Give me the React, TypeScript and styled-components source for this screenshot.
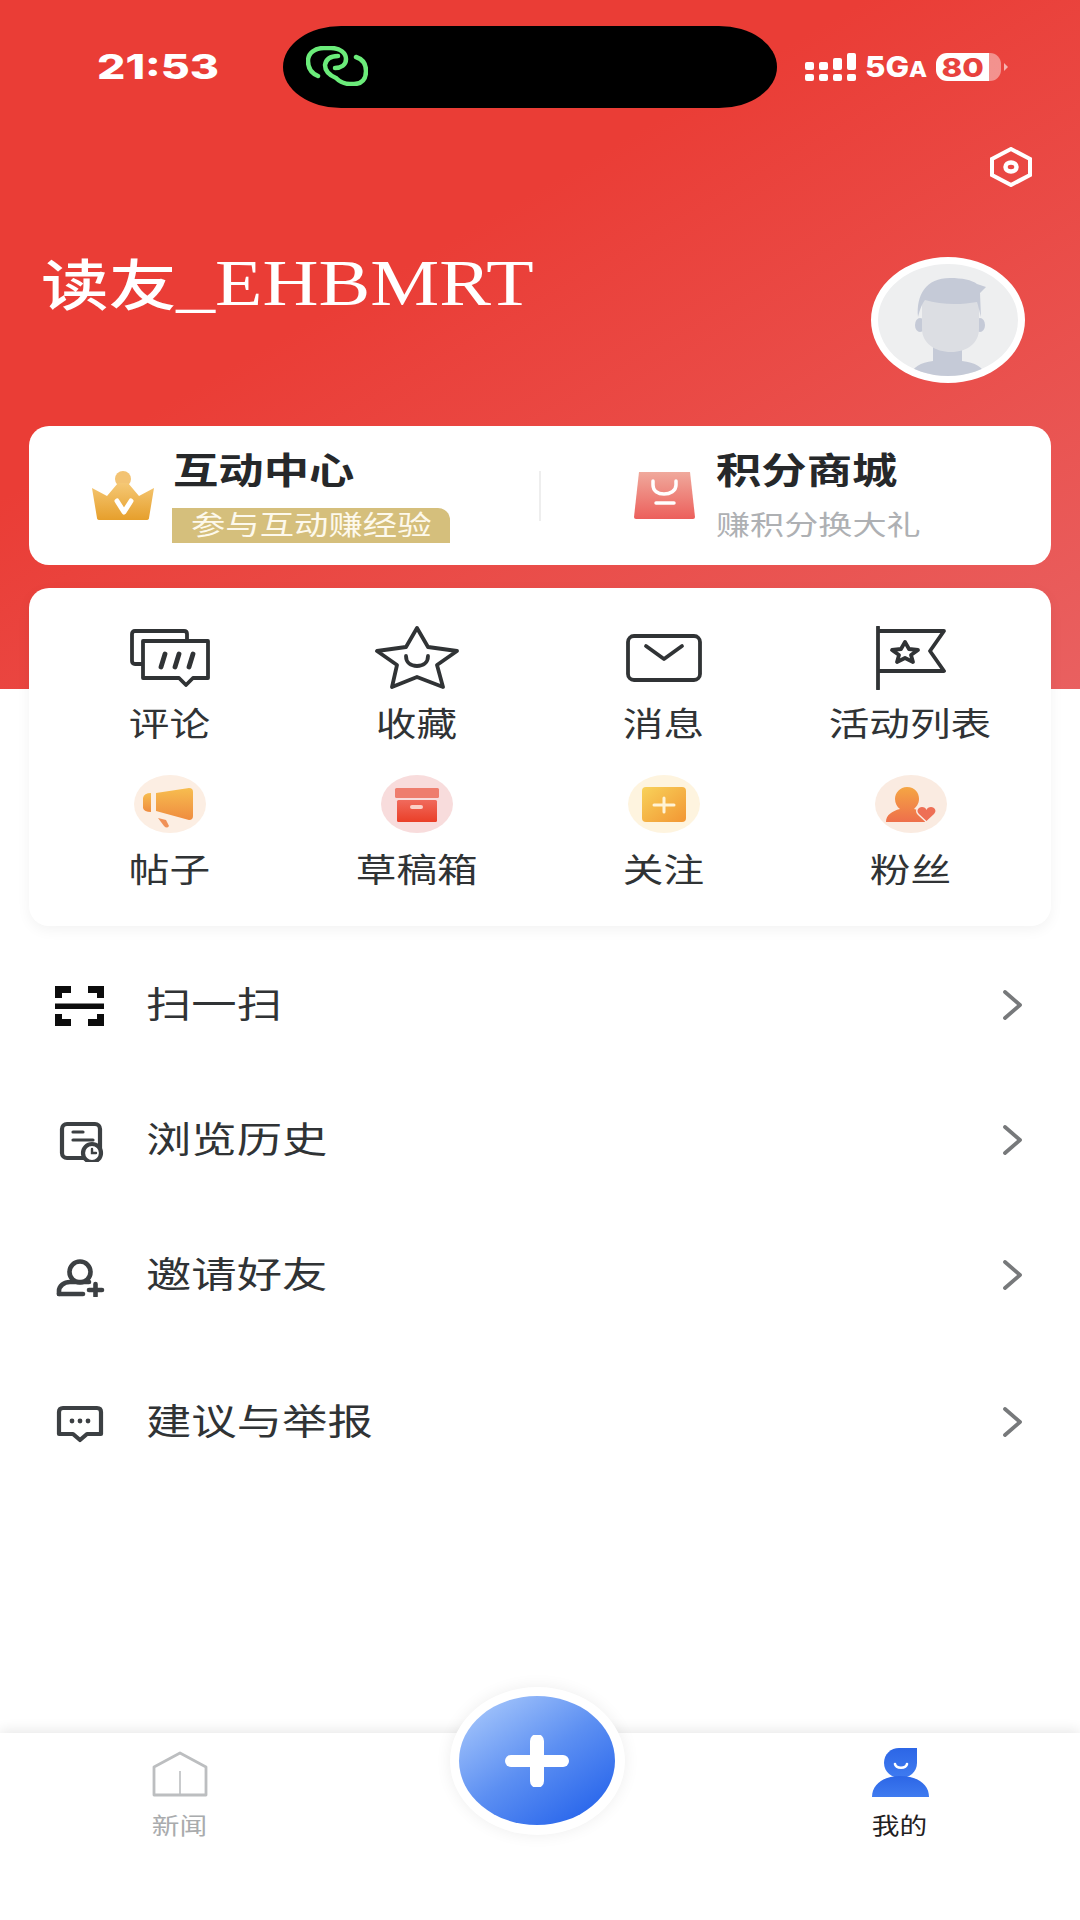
import React from 'react';
import styled, { createGlobalStyle, css } from 'styled-components';

const INK = '#303335';

const GlobalStyle = createGlobalStyle`
  html, body {
    margin: 0;
    padding: 0;
    background: #fff;
  }
  * {
    box-sizing: border-box;
  }
`;

// the reference is stretched sideways, text follows that with a scale
const wide = (origin: string, factor = 1.23) => css`
  display: inline-block;
  white-space: nowrap;
  transform: scaleX(${factor});
  transform-origin: ${origin} center;
`;

const bodyFont = `"Liberation Serif", "Noto Sans CJK SC", serif`;

export default function App() {
  const gridItems = [
    { label: '评论', icon: <CommentIcon /> },
    { label: '收藏', icon: <StarIcon /> },
    { label: '消息', icon: <MailIcon /> },
    { label: '活动列表', icon: <FlagIcon /> },
    { label: '帖子', icon: <Oval $bg='#fceee3'><HornIcon /></Oval> },
    { label: '草稿箱', icon: <Oval $bg='#f8dcdc'><BoxIcon /></Oval> },
    { label: '关注', icon: <Oval $bg='#fef4df'><PlusCardIcon /></Oval> },
    { label: '粉丝', icon: <Oval $bg='#faebe1'><FanIcon /></Oval> },
  ];

  const menuItems = [
    { label: '扫一扫', icon: <ScanIcon />, offset: 0 },
    { label: '浏览历史', icon: <HistoryIcon />, offset: 0 },
    { label: '邀请好友', icon: <InviteIcon />, offset: 0 },
    { label: '建议与举报', icon: <FeedbackIcon />, offset: 12 },
  ];

  return (
    <Page>
      <GlobalStyle />
      <Hero>
        <StatusBar>
          <Time><span>21:53</span></Time>
          <Island><LinkIcon /></Island>
          <StatusRight>
            <SignalIcon />
            <Network>5G<small>A</small></Network>
            <Battery><span>80</span></Battery>
          </StatusRight>
        </StatusBar>
        <SettingsRow><SettingsIcon /></SettingsRow>
        <Profile>
          <UserName>读友<span>_EHBMRT</span></UserName>
          <Avatar><AvatarFigure /></Avatar>
        </Profile>
      </Hero>

      <Cards>
        <PromoCard>
          <Promo $inset={63} $gap={19} $grow={false}>
            <CrownIcon />
            <PromoText>
              <PromoTitle>互动中心</PromoTitle>
              <PromoBadge><span>参与互动赚经验</span></PromoBadge>
            </PromoText>
          </Promo>
          <Divider />
          <Promo $inset={93} $gap={21} $grow={true}>
            <BagIcon />
            <PromoText>
              <PromoTitle>积分商城</PromoTitle>
              <PromoHint><span>赚积分换大礼</span></PromoHint>
            </PromoText>
          </Promo>
        </PromoCard>

        <GridCard>
          {gridItems.map((item) => (
            <GridCell key={item.label}>
              <GridIcon>{item.icon}</GridIcon>
              <GridLabel>{item.label}</GridLabel>
            </GridCell>
          ))}
        </GridCard>
      </Cards>

      <Menu>
        {menuItems.map((item) => (
          <MenuRow key={item.label} $offset={item.offset}>
            <MenuIcon>{item.icon}</MenuIcon>
            <MenuLabel>{item.label}</MenuLabel>
            <Chevron />
          </MenuRow>
        ))}
      </Menu>

      <TabBar>
        <Tab>
          <TabIcon><HomeIcon /></TabIcon>
          <TabLabel $active={false}>新闻</TabLabel>
        </Tab>
        <div />
        <Tab>
          <TabIcon><MeIcon /></TabIcon>
          <TabLabel $active={true}>我的</TabLabel>
        </Tab>
        <Fab><FabInner><FabPlus /></FabInner></Fab>
      </TabBar>
    </Page>
  );
}

function LinkIcon() {
  return (
    <svg width='62' height='40' viewBox='0 0 62 40' fill='none' stroke='#6bec7a' strokeWidth='4.5' strokeLinecap='round'>
      <path d='M12 30C5 27 2 22 2 15 2 7 9 2 18 2h7c9 0 15 5 15 11 0 6-5 9-11 9' />
      <path d='M32 10c-7 0-12 3-13 9 0 6 4 10 11 13 4 4 8 6 14 6h4c8 0 12-5 12-13 0-7-4-12-10-14' />
    </svg>
  );
}

function SignalIcon() {
  const bars = [
    { x: 0, y: 9, h: 8 },
    { x: 14, y: 9, h: 8 },
    { x: 28, y: 5, h: 12 },
    { x: 42, y: 0, h: 17 },
  ];
  return (
    <svg width='51' height='28' viewBox='0 0 51 28' fill='#fff'>
      {bars.map((bar) => (
        <g key={bar.x}>
          <rect x={bar.x} y={bar.y} width='9' height={bar.h} rx='2' />
          <rect x={bar.x} y='21' width='9' height='7' rx='2' />
        </g>
      ))}
    </svg>
  );
}

function SettingsIcon() {
  return (
    <svg width='44' height='40' viewBox='0 0 44 40' fill='none' stroke='#fff' strokeWidth='4'>
      <path d='M22 2 41 12v16L22 38 3 28V12Z' strokeLinejoin='miter' />
      <ellipse cx='22' cy='20' rx='5.5' ry='4.5' strokeWidth='4.5' />
    </svg>
  );
}

function AvatarFigure() {
  return (
    <svg width='140' height='112' viewBox='7 7 140 112'>
      <path d='M37 130c0-16 8-24 25-26V88h29v16c18 2 26 10 26 26Z' fill='#c5cad7' />
      <ellipse cx='49' cy='68' rx='5' ry='7' fill='#c5cad7' />
      <ellipse cx='109' cy='68' rx='5' ry='7' fill='#c5cad7' />
      <path d='M51 40h57v32c0 14-12 23-28 23S51 86 51 72Z' fill='#dcdee3' />
      <path d='M47 60c-2-22 8-39 32-39 12 0 22 2 27 6l9 3-6 6 1 24c-2-8-3-12-4-15-16 3-36 3-52-2-3 4-5 9-7 17Z' fill='#c5cad7' />
    </svg>
  );
}

function CrownIcon() {
  return (
    <svg width='62' height='49' viewBox='0 0 62 49'>
      <defs>
        <linearGradient id='crown' x1='0' y1='0' x2='0' y2='1'>
          <stop offset='0' stopColor='#f5c875' />
          <stop offset='1' stopColor='#e69f2c' />
        </linearGradient>
      </defs>
      <ellipse cx='31' cy='8' rx='8' ry='8' fill='#f3c373' />
      <path d='M0 17 15 25 26 12H36L47 25 62 17 57 47Q57 49 54 49H8Q5 49 5 47Z' fill='url(#crown)' />
      <path d='M25 30 32 41 39 30' fill='none' stroke='#fff' strokeWidth='5' strokeLinecap='round' strokeLinejoin='round' />
    </svg>
  );
}

function BagIcon() {
  return (
    <svg width='61' height='47' viewBox='0 0 61 47' fill='none'>
      <defs>
        <linearGradient id='bag' x1='0' y1='0' x2='0' y2='1'>
          <stop offset='0' stopColor='#f0a99c' />
          <stop offset='1' stopColor='#ec5f5b' />
        </linearGradient>
      </defs>
      <path d='M5 0H56L61 45Q61 47 59 47H2Q0 47 0 45Z' fill='url(#bag)' />
      <path d='M19 9v4c0 6 5 9 11 9s12-3 12-9V9' stroke='#fff' strokeWidth='3.5' strokeLinecap='round' />
      <path d='M22 31H40' stroke='#fff' strokeWidth='3.5' strokeLinecap='round' />
    </svg>
  );
}

function CommentIcon() {
  return (
    <svg width='80' height='58' viewBox='0 0 80 58' fill='none' stroke={INK} strokeWidth='3.8' strokeLinejoin='round'>
      <path d='M12 35H5Q2 35 2 32V5Q2 2 5 2H54Q57 2 57 5V11' />
      <path d='M13 12H78V49H63L56 56 49 49H13Z' />
      <path d='M35 25 31 38M49 25 45 38M63 25 59 38' strokeWidth='4.8' strokeLinecap='round' />
    </svg>
  );
}

function StarIcon() {
  return (
    <svg width='84' height='64' viewBox='0 0 84 64' fill='none' stroke={INK} strokeWidth='3.8' strokeLinejoin='round'>
      <path d='M42 2 53 21 82 25 62 39 68 61 42 51 17 61 22 39 2 25 31 21Z' />
      <path d='M31 30C31 37 36 40 42 40 48 40 53 37 53 30' strokeLinecap='round' />
    </svg>
  );
}

function MailIcon() {
  return (
    <svg width='76' height='48' viewBox='0 0 76 48' fill='none' stroke={INK} strokeWidth='3.8'>
      <rect x='2' y='2' width='72' height='44' rx='6' />
      <path d='M20 12 38 25 56 12' strokeLinecap='round' strokeLinejoin='round' />
    </svg>
  );
}

function FlagIcon() {
  return (
    <svg width='70' height='64' viewBox='0 0 70 64' fill='none' stroke={INK} strokeWidth='3.8' strokeLinejoin='round'>
      <path d='M2 1V63' strokeLinecap='round' />
      <path d='M2 5H68L54 25 68 45H2' />
      <path d='M29 16 33 23 42 24 35 29 37 36 29 32 21 36 23 29 16 24 25 23Z' />
    </svg>
  );
}

function HornIcon() {
  return (
    <svg width='72' height='58' viewBox='0 0 72 58'>
      <defs>
        <linearGradient id='horn' x1='0' y1='0' x2='0' y2='1'>
          <stop offset='0' stopColor='#f7bd4f' />
          <stop offset='1' stopColor='#ef8c40' />
        </linearGradient>
      </defs>
      <path d='M17 18V37Q10 37 9 33V23Q10 18 17 18Z' fill='url(#horn)' />
      <path d='M22 18 55 13Q59 13 59 17V41Q59 45 55 45L22 36Z' fill='url(#horn)' />
      <path d='M24 43 32 45 35 51Q33 54 30 51Z' fill='#f09158' />
    </svg>
  );
}

function BoxIcon() {
  return (
    <svg width='72' height='58' viewBox='0 0 72 58'>
      <defs>
        <linearGradient id='box' x1='0' y1='0' x2='0' y2='1'>
          <stop offset='0' stopColor='#f06a5c' />
          <stop offset='1' stopColor='#ea3f28' />
        </linearGradient>
      </defs>
      <rect x='14' y='13' width='44' height='10' rx='1.5' fill='#ee7d6e' />
      <rect x='16' y='25' width='40' height='22' rx='1.5' fill='url(#box)' />
      <rect x='29' y='30' width='13' height='4' rx='2' fill='#fbd0c8' />
    </svg>
  );
}

function PlusCardIcon() {
  return (
    <svg width='72' height='58' viewBox='0 0 72 58'>
      <defs>
        <linearGradient id='plusCard' x1='0' y1='0' x2='1' y2='1'>
          <stop offset='0' stopColor='#f8d25a' />
          <stop offset='1' stopColor='#f29633' />
        </linearGradient>
      </defs>
      <rect x='14' y='12' width='44' height='35' rx='4' fill='url(#plusCard)' />
      <path d='M26 30H46M36 23V37' stroke='#fff3d6' strokeWidth='3' strokeLinecap='round' />
    </svg>
  );
}

function FanIcon() {
  return (
    <svg width='72' height='58' viewBox='0 0 72 58'>
      <defs>
        <linearGradient id='fan' x1='0' y1='0' x2='0' y2='1'>
          <stop offset='0' stopColor='#f5a644' />
          <stop offset='1' stopColor='#ee6f4b' />
        </linearGradient>
      </defs>
      <path d='M32 12C40 12 44 18 44 24 44 29 41 32 39 34 47 36 50 40 50 47H11C11 40 17 36 25 34 22 32 20 28 20 24 20 18 25 12 32 12Z' fill='url(#fan)' />
      <path d='M51.5 46 44 39C41 36 43 32 47 32 49 32 51 33 51.5 35 52 33 54 32 56 32 60 32 62 36 59 39Z' fill='#ee6f55' stroke='#faebe1' strokeWidth='3' paintOrder='stroke' />
    </svg>
  );
}

function ScanIcon() {
  return (
    <svg width='50' height='44' viewBox='0 0 50 44' fill='#0c0c0c'>
      <path d='M0 3H16V10H7V15H0ZM33 3H49V15H42V10H33ZM0 20.500H49V26H0ZM0 31H7V36H16V43H0ZM42 31H49V43H33V36H42Z' />
    </svg>
  );
}

function HistoryIcon() {
  return (
    <svg width='50' height='44' viewBox='0 0 50 44' fill='none' stroke='#3c4043' strokeWidth='4.2' strokeLinecap='round'>
      <rect x='7' y='6' width='38' height='34' rx='5' />
      <path d='M18 14H28M18 22H38' strokeWidth='3.2' />
      <circle cx='37' cy='35' r='9' fill='#fff' />
      <path d='M37 31V35H41' strokeWidth='2.4' />
    </svg>
  );
}

function InviteIcon() {
  return (
    <svg width='50' height='44' viewBox='0 0 50 44' fill='none' stroke='#3c4043' strokeWidth='4.6' strokeLinecap='round'>
      <circle cx='25' cy='19' r='10.500' />
      <path d='M4 41V38C4 33 9 29 15 29H34' />
      <path d='M4 41H28' />
      <path d='M34 37H47M40.500 31V43' />
    </svg>
  );
}

function FeedbackIcon() {
  return (
    <svg width='50' height='44' viewBox='0 0 50 44' fill='none' stroke='#3c4043' strokeWidth='4.2' strokeLinejoin='round'>
      <path d='M8 8H42Q46 8 46 12V34H32L25 40 18 34H4V12Q4 8 8 8Z' />
      <g fill='#3c4043' stroke='none'>
        <circle cx='17' cy='21' r='2.400' />
        <circle cx='25' cy='21' r='2.400' />
        <circle cx='33' cy='21' r='2.400' />
      </g>
    </svg>
  );
}

function Chevron() {
  return (
    <svg width='20' height='30' viewBox='0 0 20 30' fill='none' stroke='#77797b' strokeWidth='3.8' strokeLinecap='round' strokeLinejoin='round'>
      <path d='M3 2 18 15 3 28' />
    </svg>
  );
}

function HomeIcon() {
  return (
    <svg width='56' height='46' viewBox='0 0 56 46' fill='none' stroke='#bcbec0' strokeWidth='2.800' strokeLinejoin='round'>
      <path d='M2 16 28 2 54 16V44H2Z' />
      <path d='M28 20V44' strokeWidth='1.600' />
    </svg>
  );
}

function MeIcon() {
  return (
    <svg width='57' height='49' viewBox='0 0 57 49'>
      <defs>
        <linearGradient id='me' x1='0' y1='0' x2='0' y2='1'>
          <stop offset='0' stopColor='#2c66e6' />
          <stop offset='1' stopColor='#3f7bf0' />
        </linearGradient>
      </defs>
      <path d='M27 0H45V15C45 24 37 30 29 30 20 30 12 24 12 15 12 6 19 0 27 0Z' fill='url(#me)' />
      <path d='M0 49C0 36 12 28 28 28 45 28 57 36 57 49Z' fill='url(#me)' />
      <path d='M23 16C24 21 34 21 35 16' fill='none' stroke='#fff' strokeWidth='2.600' strokeLinecap='round' />
    </svg>
  );
}

function FabPlus() {
  return (
    <svg width='64' height='52' viewBox='0 0 64 52' fill='none' stroke='#fff' strokeLinecap='round'>
      <path d='M6 26H58' strokeWidth='12' />
      <path d='M32 6V46' strokeWidth='14' />
    </svg>
  );
}

const Page = styled.div`
  position: relative;
  display: flex;
  flex-direction: column;
  width: 1080px;
  height: 1920px;
  overflow: hidden;
  background: #fff;
  font-family: ${bodyFont};
`;

const Hero = styled.header`
  height: 689px;
  padding-top: 26px;
  background: linear-gradient(150deg, #ea3d36 38%, #e96060 100%);
`;

const StatusBar = styled.div`
  display: flex;
  align-items: center;
  padding-left: 97px;
`;

const Time = styled.div`
  width: 186px;
  margin-top: -2px;
  color: #fff;
  font: 800 34px Inter, sans-serif;

  span {
    ${wide('left', 1.31)}
  }
`;

const Island = styled.div`
  display: flex;
  align-items: center;
  width: 494px;
  height: 82px;
  padding-left: 23px;
  padding-bottom: 2px;
  border-radius: 58px / 41px;
  background: #000;
`;

const StatusRight = styled.div`
  display: flex;
  align-items: center;
  gap: 9px;
  margin-left: 28px;
`;

const Network = styled.div`
  width: 62px;
  color: #fff;
  font: 800 28px Inter, sans-serif;
  ${wide('left', 1.12)}

  small {
    font-size: 21px;
  }
`;

const Battery = styled.div`
  position: relative;
  display: flex;
  align-items: center;
  justify-content: center;
  width: 65px;
  height: 28px;
  padding-right: 12px;
  border-radius: 11px;
  background: linear-gradient(90deg, #fff 81%, rgba(255, 255, 255, 0.42) 81%);
  color: #e8423e;
  font: 800 26px Inter, sans-serif;

  span {
    ${wide('center', 1.2)}
  }

  &::after {
    content: '';
    position: absolute;
    right: -7px;
    top: 10px;
    border-left: 4px solid rgba(255, 255, 255, 0.6);
    border-top: 4px solid transparent;
    border-bottom: 4px solid transparent;
  }
`;

const SettingsRow = styled.div`
  display: flex;
  justify-content: flex-end;
  margin-top: 39px;
  padding-right: 47px;
`;

const Profile = styled.div`
  display: flex;
  justify-content: space-between;
  margin-top: 70px;
  padding: 0 55px 0 41px;
`;

const UserName = styled.h1`
  margin: -6px 0 0;
  color: #fff;
  font-size: 55px;
  font-weight: 500;
  line-height: 64px;
  ${wide('left')}

  span {
    display: inline-block;
    font-size: 65px;
    transform: scaleX(0.97);
    transform-origin: left center;
  }
`;

const Avatar = styled.div`
  width: 154px;
  height: 126px;
  border: 7px solid #fff;
  border-radius: 50%;
  background: #eeeff0;
  overflow: hidden;
`;

const Cards = styled.div`
  display: flex;
  flex-direction: column;
  gap: 23px;
  margin-top: -263px;
  padding: 0 29px;
`;

const PromoCard = styled.section`
  display: flex;
  align-items: center;
  height: 139px;
  border-radius: 20px;
  background: #fff;
`;

const Promo = styled.div<{ $inset: number; $gap: number; $grow: boolean }>`
  display: flex;
  align-items: center;
  gap: ${({ $gap }) => $gap}px;
  flex: ${({ $grow }) => ($grow ? '1' : '0 0 510px')};
  padding-left: ${({ $inset }) => $inset}px;
`;

const Divider = styled.div`
  width: 2px;
  height: 50px;
  background: #eeeeee;
`;

const PromoText = styled.div`
  display: flex;
  flex-direction: column;
  align-items: flex-start;
  padding-top: 2px;
`;

const PromoTitle = styled.div`
  color: #26282a;
  font-size: 36px;
  font-weight: 700;
  line-height: 42px;
  ${wide('left', 1.26)}
`;

const PromoBadge = styled.div`
  width: 278px;
  height: 35px;
  margin-top: 15px;
  margin-left: -1px;
  padding-left: 19px;
  border-radius: 0 12px 0 0;
  background: #d5bf7c;
  color: #fdf9ec;
  font-size: 27.5px;
  line-height: 35px;

  span {
    ${wide('left', 1.25)}
  }
`;

const PromoHint = styled.div`
  height: 35px;
  margin-top: 15px;
  color: #aeb0b3;
  font-size: 27.5px;
  line-height: 35px;

  span {
    ${wide('left', 1.24)}
  }
`;

const GridCard = styled.section`
  display: grid;
  grid-template-columns: repeat(4, 1fr);
  row-gap: 27px;
  height: 338px;
  padding: 38px 17px 36px;
  border-radius: 20px;
  background: #fff;
  box-shadow: 0 4px 14px rgba(0, 0, 0, 0.05);
`;

const GridCell = styled.div`
  display: flex;
  flex-direction: column;
  align-items: center;
`;

const GridIcon = styled.div`
  display: flex;
  align-items: center;
  justify-content: center;
  height: 64px;
`;

const Oval = styled.div<{ $bg: string }>`
  display: flex;
  width: 72px;
  height: 58px;
  border-radius: 50%;
  background: ${({ $bg }) => $bg};
`;

const GridLabel = styled.div`
  margin-top: 15px;
  color: ${INK};
  font-size: 32.5px;
  line-height: 40px;
  ${wide('center', 1.25)}
`;

const Menu = styled.nav`
  display: flex;
  flex-direction: column;
  padding-top: 11px;
`;

const MenuRow = styled.div<{ $offset: number }>`
  display: flex;
  align-items: center;
  height: 135px;
  margin-top: ${({ $offset }) => $offset}px;
  padding: 0 58px 0 55px;
`;

const MenuIcon = styled.div`
  display: flex;
  width: 91px;
`;

const MenuLabel = styled.div`
  flex: 1;
  padding-top: 2px;
  color: ${INK};
  font-size: 36px;
  line-height: 44px;
  ${wide('left', 1.26)}
`;

const TabBar = styled.footer`
  position: absolute;
  left: 0;
  right: 0;
  bottom: 0;
  display: grid;
  grid-template-columns: repeat(3, 1fr);
  height: 187px;
  background: #fff;
  box-shadow: 0 -3px 12px rgba(0, 0, 0, 0.09);
`;

const Tab = styled.div`
  display: flex;
  flex-direction: column;
  align-items: center;
  padding-top: 15px;
`;

const TabIcon = styled.div`
  display: flex;
  align-items: flex-end;
  height: 49px;
`;

const TabLabel = styled.div<{ $active: boolean }>`
  margin-top: 15px;
  color: ${({ $active }) => ($active ? '#1f2022' : '#a9abad')};
  font-size: 22.5px;
  line-height: 30px;
  ${wide('center')}
`;

const Fab = styled.div`
  position: absolute;
  left: 450px;
  top: -46px;
  width: 175px;
  height: 148px;
  padding: 9px;
  border-radius: 50%;
  background: #fff;
  box-shadow: 0 0 16px rgba(0, 0, 0, 0.07);
`;

const FabInner = styled.div`
  display: flex;
  align-items: center;
  justify-content: center;
  width: 156px;
  height: 129px;
  border-radius: 50%;
  background: linear-gradient(145deg, #a4c5fb 8%, #5c8ff2 50%, #2563eb 92%);
`;
